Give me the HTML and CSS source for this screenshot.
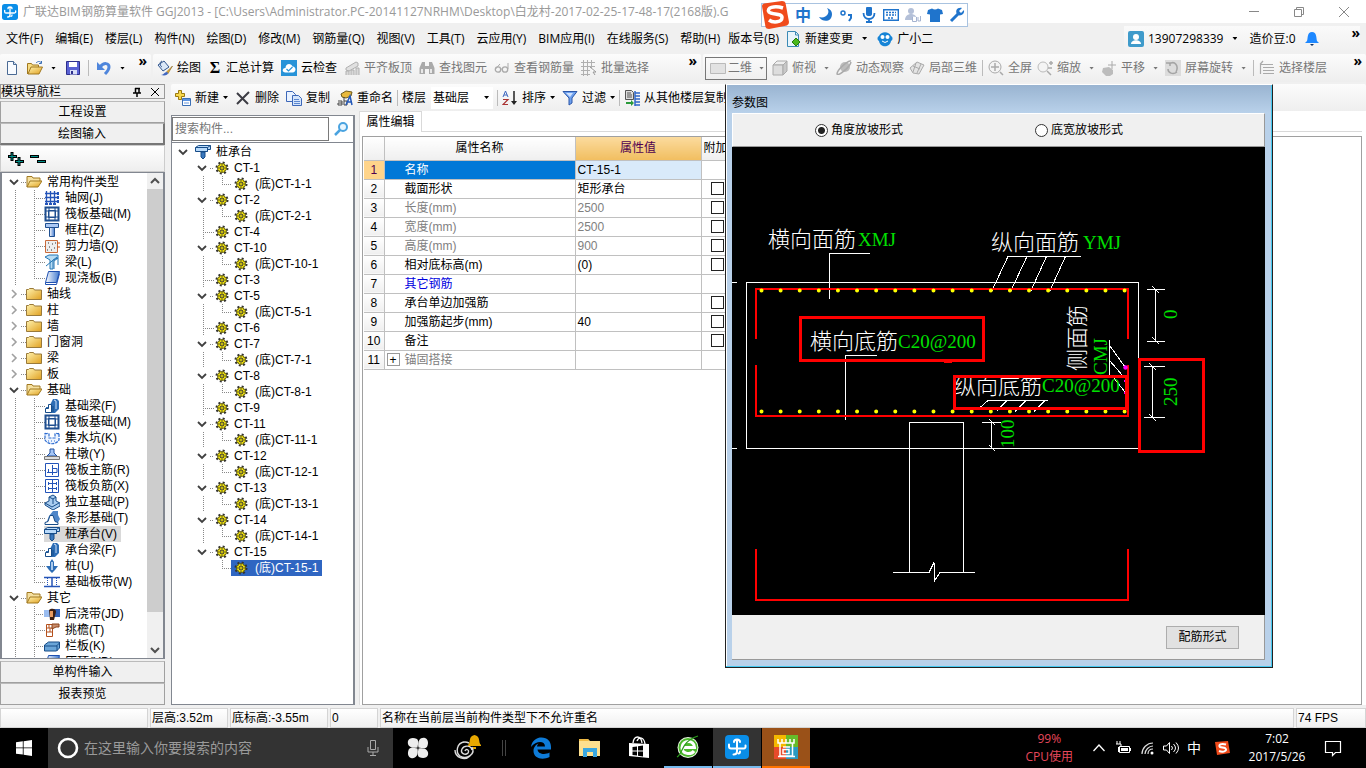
FILE: index.html
```html
<!DOCTYPE html>
<html lang="zh-CN">
<head>
<meta charset="utf-8">
<title>广联达BIM钢筋算量软件 GGJ2013</title>
<link rel="stylesheet" href="styles.css">
</head>
<body>
<svg class="defs" aria-hidden="true">
<defs>
<linearGradient id="gold" x1="0" y1="0" x2="1" y2="1"><stop offset="0" stop-color="#fff3b0"/><stop offset="1" stop-color="#e0a020"/></linearGradient>
<linearGradient id="steel" x1="0" y1="0" x2="1" y2="0"><stop offset="0" stop-color="#fff"/><stop offset="1" stop-color="#3f78cf"/></linearGradient>
<symbol id="logo" viewBox="0 0 24 24"><rect width="24" height="24" rx="4" fill="#0a8ee8"/><path d="M4 9.500v2q0 2 2 2h12.500q2.500 0 2-3M12 5v11q0 3.500-3.500 3.500M9 7q0-2.500 3-2.500t3 2.500M15 16.500q0 2-1.500 2" fill="none" stroke="#fff" stroke-width="2" stroke-linecap="round"/></symbol>
<symbol id="new" viewBox="0 0 16 16"><path d="M3.500 1.500h6l3 3v10h-9z" fill="#f8fbff" stroke="#4a6a94"/><path d="M9.500 1.500v3h3" fill="#cfe0f5" stroke="#4a6a94"/></symbol>
<symbol id="open" viewBox="0 0 16 16"><path d="M.5 14V3.500h4l1 1.500h6v3" fill="#f7dc82" stroke="#a07820"/><path d="M1 14l3-7h11.500l-3.500 7z" fill="url(#gold)" stroke="#a07820"/><path d="M9 3c2-2 4-2 5.500 0M14.500 1v2.500H12" fill="none" stroke="#3b6fb5"/></symbol>
<symbol id="save" viewBox="0 0 16 16"><path d="M1.500 1.500h13v13h-13z" fill="#5a62d4" stroke="#2d2f8c"/><path d="M4 2h8v5H4z" fill="#fff"/><path d="M5 10h7v4.500H5z" fill="#d8def8"/><path d="M6 11h2v3H6z" fill="#2d2f8c"/></symbol>
<symbol id="undo" viewBox="0 0 16 16"><path d="M4 7c4-5 9-4 9 0 0 3-2 5-4 7" fill="none" stroke="#4f86dc" stroke-width="3"/><path d="M1 2v8h8z" fill="#4f86dc"/></symbol>
<symbol id="paint" viewBox="0 0 16 16"><path d="M1 5l6-4 5 6-6 4z" fill="#dbe8f8" stroke="#31568e"/><path d="M5 1c-3 1-2 5 0 6" fill="none" stroke="#31568e"/><path d="M15.500 6l-6 6 1.500 1.500z" fill="#f0b030" stroke="#80601a" stroke-width=".6"/><path d="M10 12c-3 0-3 3-6 3 4 1 7 0 7-2z" fill="#4167c0"/></symbol>
<symbol id="cloud" viewBox="0 0 16 16"><path d="M0 0h16v16H0z" fill="#2793d8"/><path d="M4 12.500c-4-1-2-5 .5-4.500 0-5 6-5 7-1.500 4 0 4 6 0 6z" fill="#fff"/><path d="M5.500 9l2 2 4-4" fill="none" stroke="#2793d8" stroke-width="1.200"/></symbol>
<symbol id="align" viewBox="0 0 16 16"><path d="M2 8l10-6 2 1v3L5 11l-3-1z" fill="#e0e0e0" stroke="#b0b0b0"/><path d="M2 15v-4h3v4M7 15v-5h3v5M12 15V8h3v7" fill="#d8d8d8" stroke="#b0b0b0"/></symbol>
<symbol id="find" viewBox="0 0 16 16"><path d="M3 2h3v4h4V2h3l2.500 6v6H10V9H6v5H.5V8z" fill="#aaa"/><path d="M2 9h2v4H2zm9 0h2v4h-2z" fill="#e8e8e8"/></symbol>
<symbol id="glass" viewBox="0 0 16 16"><circle cx="4" cy="9.500" r="2.700" fill="none" stroke="#aaa" stroke-width="1.300"/><circle cx="11" cy="9.500" r="2.700" fill="none" stroke="#aaa" stroke-width="1.300"/><path d="M6 9h3M1.500 9L6 4M14 9V3" fill="none" stroke="#aaa"/></symbol>
<symbol id="batch" viewBox="0 0 16 16"><path d="M0 2.500h14M0 6.500h14M0 10.500h9M0 14.500h9M2.500 0v16M6.500 0v16M10.500 0v8" stroke="#b0b0b0" fill="none"/><path d="M9 7l6 5h-3l2 3" fill="#fff" stroke="#999"/></symbol>
<symbol id="plane" viewBox="0 0 16 16"><path d="M.5 3.500h15v10H.5z" fill="#e2e2e2" stroke="#bababa"/></symbol>
<symbol id="cube" viewBox="0 0 16 16"><path d="M1 5l4-4h10l-4 4z" fill="#eee" stroke="#aaa"/><path d="M1 5h10v10H1z" fill="#ddd" stroke="#aaa"/><path d="M11 5l4-4v10l-4 4z" fill="#c8c8c8" stroke="#aaa"/></symbol>
<symbol id="orbit" viewBox="0 0 16 16"><circle cx="9" cy="7" r="5" fill="#bcbcbc"/><path d="M15 1C12 0 1 10 1 14c2 2 13-7 14-12" fill="none" stroke="#aaa" stroke-width="1.500"/></symbol>
<symbol id="part" viewBox="0 0 16 16"><path d="M1 8l7-6 7 3-5 9-6-1z" fill="#e4e4e4" stroke="#aaa"/><path d="M4 6l7 3M7 3l-3 9M12 4l-4 9" stroke="#aaa" fill="none"/></symbol>
<symbol id="full" viewBox="0 0 16 16"><circle cx="7" cy="7" r="6" fill="#f4f4f4" stroke="#aaa"/><path d="M7 3v8M3 7h8M12 12l3 3" stroke="#aaa" stroke-width="1.500"/></symbol>
<symbol id="zoomi" viewBox="0 0 16 16"><circle cx="6" cy="7" r="5" fill="#f4f4f4" stroke="#bbb"/><path d="M10 11l4 4M12 3h4M14 1v4M11 8h4" stroke="#aaa" stroke-width="1.500"/></symbol>
<symbol id="pan" viewBox="0 0 16 16"><path d="M2 8l6-1 4 3v4l-3 2H5l-4-4z" fill="#bcbcbc"/><path d="M11 1v8M7 5h8" stroke="#aaa"/></symbol>
<symbol id="rot" viewBox="0 0 16 16"><path d="M0 0h16v16H0z" fill="#dcdcdc"/><path d="M4 4c6-4 10 2 7 8M12 12c-4 3-9 1-9-3M1 3h4v3" fill="none" stroke="#a4a4a4" stroke-width="1.500"/></symbol>
<symbol id="floors" viewBox="0 0 16 16"><path d="M1 4.500h13M4 1L1 4.500M4 7.500h11M4 10.500h11M4 13.500h11M1.500 5v9" stroke="#aaa" fill="none" stroke-width="1.200"/></symbol>
<symbol id="add" viewBox="0 0 16 16"><path d="M3.500.5h3v3h3v3h-3v3h-3v-3h-3v-3h3z" fill="#f8d84c" stroke="#9a7a10"/><path d="M7.500 8.500h8v7h-8z" fill="#fff" stroke="#3b6fb5"/><path d="M8 9h7v2H8z" fill="#5c93e0"/><path d="M9 13h5" stroke="#6b9adf"/></symbol>
<symbol id="del" viewBox="0 0 16 16"><path d="M2 3l11 11M14 2L2 14" stroke="#3c3c44" stroke-width="2" fill="none"/></symbol>
<symbol id="copy" viewBox="0 0 16 16"><path d="M.5 1.500h6l3 3v7h-9z" fill="#e9f2ff" stroke="#3c67b8"/><path d="M6.500 5.500h6l3 3v7h-9z" fill="#d5e5fb" stroke="#3c67b8"/><path d="M8 9.500h5M8 11.500h6M8 13.500h6" stroke="#5d88d0"/></symbol>
<symbol id="rename" viewBox="0 0 16 16"><path d="M4 4l5-3 6 1-1 4-5 2-4-1z" fill="#e8b93c" stroke="#6d5a1c"/><path d="M1 11h4v4H1v-2h4M7 7v8h3v-4H7" fill="none" stroke="#444"/><path d="M9 15L13 6l2 9M11 12h4" fill="none" stroke="#2458b8" stroke-width="1.500"/></symbol>
<symbol id="sort" viewBox="0 0 16 16"><path d="M1 7l2.500-6L6 7M2 5h3" fill="none" stroke="#3c66c0"/><path d="M1 9.500h5l-5 5h5" fill="none" stroke="#a33" stroke-width="1.200"/><path d="M12 1v11" stroke="#222" stroke-width="1.500"/><path d="M9 11h6l-3 4z" fill="#222"/></symbol>
<symbol id="filter" viewBox="0 0 16 16"><path d="M1 1.500h14L10 8v5l-3 2V8z" fill="#6da0ee" stroke="#2c57a8"/><path d="M4 3h7L8 7z" fill="#cfe2ff"/></symbol>
<symbol id="levels" viewBox="0 0 16 16"><path d="M1.500.5h6l2 2v7h-8z" fill="#ddd" stroke="#555"/><path d="M3 3h4M3 5h5M3 7h5" stroke="#555"/><path d="M11 1v15M11 3h5M11 6h5M11 9h5M11 12h5M11 15h5" stroke="#2e66c8" stroke-width="1.500"/><path d="M2 12h5v-2l3 3-3 3v-2H2z" fill="#2a9a3a"/></symbol>
<symbol id="change" viewBox="0 0 16 16"><path d="M2.500.5h8l3 3v12h-11z" fill="#e8f5fc" stroke="#3b8ab5"/><path d="M10.500 1v3h3" fill="none" stroke="#3b8ab5"/><path d="M11 7l4 4-4 4-4-4z" fill="#4ab81c" stroke="#267a0c"/></symbol>
<symbol id="mascot" viewBox="0 0 16 16"><path d="M2 5c2-5 10-5 12 0 2 1 2 4 0 5-1 7-11 7-12 0-2-1-2-4 0-5z" fill="#1684d6"/><circle cx="5.500" cy="6" r="2" fill="#fff"/><circle cx="10.500" cy="6" r="2" fill="#fff"/><path d="M5 10q3 3 6 0" stroke="#fff" fill="none"/></symbol>
<symbol id="user" viewBox="0 0 16 16"><rect width="16" height="16" rx="2" fill="#3f9bcb"/><circle cx="8" cy="6" r="3" fill="#fff"/><path d="M3 13c0-5 10-5 10 0z" fill="#fff"/></symbol>
<symbol id="bell" viewBox="0 0 16 16"><path d="M8 1c5 0 4 6 5 9l2 2H1l2-2c1-3 0-9 5-9z" fill="#1e88ff"/><path d="M6 13h4l-2 2z" fill="#136"/></symbol>
<symbol id="chev" viewBox="0 0 10 10"><path d="M1 3l4 4 4-4" fill="none" stroke="#404040" stroke-width="1.800"/></symbol>
<symbol id="chevr" viewBox="0 0 10 10"><path d="M3 1l4 4-4 4" fill="none" stroke="#a0a0a0" stroke-width="1.600"/></symbol>
<symbol id="folder" viewBox="0 0 16 16"><path d="M.5 13.500v-10h2l1-1h4l1 1.500h7v9.500z" fill="url(#gold)" stroke="#9a7a3a"/></symbol>
<symbol id="foldo" viewBox="0 0 16 16"><path d="M1 13V2.500h5L7 4h7v3" fill="#f5e0a0" stroke="#a07820"/><path d="M1 13l3-6h12l-4 6z" fill="url(#gold)" stroke="#a07820"/></symbol>
<symbol id="gridi" viewBox="0 0 16 16"><path d="M2.500 1v12M6.500 1v12M10.500 1v12M1 3.500h12M1 7.500h12M1 11.500h12" stroke="#2454b8" stroke-width="1.300"/><path d="M13 2h2v3h-2zm0 4h2v3h-2zm0 4h2v3h-2zM1 13h3v2H1zm4 0h3v2H5zm4 0h3v2H9z" fill="#2454b8"/></symbol>
<symbol id="raft" viewBox="0 0 16 16"><path d="M1.500 1.500h13v13h-13z" fill="#fff" stroke="#1f4f90" stroke-width="2"/><path d="M4.500 4.500h7v7h-7zM5 1v14M11 1v14M1 5h14M1 11h14" fill="none" stroke="#1f4f90"/></symbol>
<symbol id="col" viewBox="0 0 16 16"><path d="M1.500 1.500h13v4h-13z" fill="#aac8f4" stroke="#1f4f90"/><path d="M5.500 5.500h5v9h-5z" fill="url(#steel)" stroke="#1f4f90"/></symbol>
<symbol id="wall" viewBox="0 0 16 16"><path d="M1.500 2.500h12v12h-12z" fill="#eee" stroke="#c86a3a"/><path d="M4 5h1M8 6h1M5 9h1M10 10h1M7 12h1M11 5h1M3 12h1" stroke="#333"/><path d="M13 5h3M13 9h3" stroke="#d05010"/></symbol>
<symbol id="beam" viewBox="0 0 16 16"><path d="M1 3l4-2h9v3L9 6v9H6V6z" fill="#b8dcf4" stroke="#2577b5"/><path d="M2 12l11-9M10 15V7l4-3v7" fill="none" stroke="#2577b5"/></symbol>
<symbol id="slab" viewBox="0 0 16 16"><path d="M4.500 1.500h11l-3 11H1.500z" fill="url(#steel)" stroke="#1f50b0"/><path d="M1.500 12.500v2h11l3-11" fill="none" stroke="#1f50b0"/></symbol>
<symbol id="fbeam" viewBox="0 0 16 16"><path d="M2 15V9h3l4-8h4l2 2v8l-4 4z" fill="#2d6db5"/><path d="M1.500 14.500v-4h3v-4h3v8zM9 8v6" fill="#fff" stroke="#174c88"/><path d="M10 2l2 1v8" fill="none" stroke="#cfe3fa"/></symbol>
<symbol id="pit" viewBox="0 0 16 16"><path d="M1 3c1 2 3-1 4 1v4h6V4c1-2 3 1 4-1v7c-3 5-11 5-14 0z" fill="#eef5ff" stroke="#2a6ad0" stroke-width="1.200" stroke-dasharray="3 1"/><path d="M4 11h8" stroke="#2a6ad0" stroke-dasharray="1 2"/></symbol>
<symbol id="pier" viewBox="0 0 16 16"><path d="M6 3h4v4l3 3H3l3-3z" fill="#a5c6f5" stroke="#1f4fa0"/><path d="M.5 10.500h15v3H.5z" fill="#ddd" stroke="#777"/></symbol>
<symbol id="barx" viewBox="0 0 16 16"><path d="M1.500 1.500h13v13h-13z" fill="#fff" stroke="#2454b8"/><path d="M8.500 3v10M3 10.500h10M4.500 7v3.500M8 6.500h5v4" stroke="#2454b8" fill="none"/></symbol>
<symbol id="bary" viewBox="0 0 16 16"><path d="M1.500 1.500h13v13h-13z" fill="#fff" stroke="#2454b8"/><path d="M8.500 2v12M4 5.500h8M4 10.500h8M4.500 4v3M12.500 4v3M4.500 9v3M12.500 9v3" stroke="#2454b8" fill="none"/></symbol>
<symbol id="foot" viewBox="0 0 16 16"><path d="M1 9l4-2V3l4-2 3 2v4l4 2v3l-7 4-8-5z" fill="#a9cdf0" stroke="#174c88"/><path d="M5 3l4 2v5M9 5l3-2M1 9l7 4 7-4" fill="none" stroke="#174c88"/></symbol>
<symbol id="strip" viewBox="0 0 16 16"><path d="M2 14h11l3-5-2-4V1H9L5 6z" fill="#4f86c8"/><path d="M1 14.500v-2l3-1 2-6h3l2 6 3 1v2z" fill="#fff" stroke="#174c88"/></symbol>
<symbol id="cap" viewBox="0 0 16 16"><path d="M.5 3.500l3-2h12v4h-3v2H.5z" fill="#b9dafa" stroke="#174c88"/><path d="M.5 3.500h12v4M12.500 3.500l3-2" fill="none" stroke="#174c88"/><path d="M6 8h4v5l-2 2-2-2z" fill="#3977bd" stroke="#174c88"/></symbol>
<symbol id="pile" viewBox="0 0 16 16"><path d="M8 1l2 3v4h4l-3 4-3 3-3-3-3-4h4V4z" fill="#2d6db5"/><path d="M8 4v8" stroke="#d6e8fc" stroke-width="1.500"/></symbol>
<symbol id="band" viewBox="0 0 16 16"><path d="M0 3.500h16M0 12.500h16M8 4v8" stroke="#2454b8" stroke-width="1.500"/><path d="M3.500 4v8M12.500 4v8" stroke="#2454b8" stroke-dasharray="1 1"/></symbol>
<symbol id="post" viewBox="0 0 16 16"><path d="M0 4h6v7H0z" fill="#9bbdf0"/><path d="M10 3h6v8h-6z" fill="#3262b8"/><path d="M5 4c2-2 7-2 7 2l-2 8H6z" fill="#3b1e12"/><path d="M6 5h3v6H6z" fill="#e89b60"/></symbol>
<symbol id="eave" viewBox="0 0 16 16"><path d="M2.500 2.500h6v12h-6zM2 6h6M2 10h6M5 2v4M6 6v4" fill="#fff" stroke="#b5501c"/><path d="M8 2h7v3h-3l-4 2z" fill="#c98c6a" stroke="#8a4018"/></symbol>
<symbol id="rail" viewBox="0 0 16 16"><path d="M.5 13V7l4-3h11v6l-3 3z" fill="#6aa5d8" stroke="#174c88"/><path d="M1 8h12v5M12.500 8l3-3" fill="none" stroke="#174c88"/></symbol>
<symbol id="gear" viewBox="0 0 14 14"><circle cx="7" cy="7" r="5.500" fill="none" stroke="#333" stroke-width="2" stroke-dasharray="2 2.320"/><circle cx="7" cy="7" r="4.500" fill="#f5e60a" stroke="#4a4608" stroke-width=".8"/><circle cx="7" cy="7" r="1.500" fill="none" stroke="#333" stroke-width=".8"/><path d="M7 3v2M7 9v2M3 7h2M9 7h2M4.500 4.500L6 6M9.500 4.500L8 6M4.500 9.500L6 8M9.500 9.500L8 8" stroke="#333" stroke-width=".8"/></symbol>
</defs>
</svg>

<header class="titlebar">
  <svg class="ic"><use href="#logo"/></svg>
  <h1>广联达BIM钢筋算量软件 GGJ2013 - [C:\Users\Administrator.PC-20141127NRHM\Desktop\白龙村-2017-02-25-17-48-17(2168版).G</h1>
  <div class="winbtns">
    <button aria-label="最小化"><svg viewBox="0 0 12 12"><path d="M1 5.500h10"/></svg></button>
    <button aria-label="还原"><svg viewBox="0 0 12 12"><path d="M1.500 3.500h7v7h-7zM3.500 3V1.500h7v7H9"/></svg></button>
    <button aria-label="关闭"><svg viewBox="0 0 12 12"><path d="M1 1l10 10M11 1L1 11"/></svg></button>
  </div>
</header>

<nav class="menubar">
  <button>文件(F)</button><button>编辑(E)</button><button>楼层(L)</button><button>构件(N)</button><button>绘图(D)</button><button>修改(M)</button><button>钢筋量(Q)</button><button>视图(V)</button><button>工具(T)</button><button>云应用(Y)</button><button>BIM应用(I)</button><button>在线服务(S)</button><button>帮助(H)</button>
  <div class="extra">
    <button>版本号(B)</button>
    <button><svg class="ic"><use href="#change"/></svg>新建变更<i class="caret"></i></button>
    <button><svg class="ic"><use href="#mascot"/></svg>广小二</button>
  </div>
  <div class="account">
    <button><svg class="ic"><use href="#user"/></svg>13907298339<i class="caret"></i></button>
    <button>造价豆:0</button>
    <button aria-label="通知"><svg class="ic"><use href="#bell"/></svg></button>
    <b class="more">»</b>
  </div>
</nav>

<div class="toolrow">
  <div class="band file">
    <button aria-label="新建"><svg class="ic"><use href="#new"/></svg></button>
    <button aria-label="打开"><svg class="ic"><use href="#open"/></svg><i class="caret"></i></button>
    <button aria-label="保存"><svg class="ic"><use href="#save"/></svg></button>
    <i class="sep"></i>
    <button aria-label="撤销"><svg class="ic"><use href="#undo"/></svg><i class="caret"></i></button>
    <b class="more">»</b>
  </div>
  <div class="band draw">
    <button><svg class="ic"><use href="#paint"/></svg>绘图</button>
    <button><b class="sigma">Σ</b>汇总计算</button>
    <button><svg class="ic"><use href="#cloud"/></svg>云检查</button>
    <button class="off"><svg class="ic"><use href="#align"/></svg>平齐板顶</button>
    <button class="off"><svg class="ic"><use href="#find"/></svg>查找图元</button>
    <button class="off"><svg class="ic"><use href="#glass"/></svg>查看钢筋量</button>
    <button class="off"><svg class="ic"><use href="#batch"/></svg>批量选择</button>
    <b class="more">»</b>
  </div>
  <div class="band view">
    <div class="viewsel"><svg class="ic"><use href="#plane"/></svg><select aria-label="视图维度"><option>二维</option></select><i class="caret"></i></div>
    <button class="off"><svg class="ic"><use href="#cube"/></svg>俯视<i class="caret"></i></button>
    <button class="off"><svg class="ic"><use href="#orbit"/></svg>动态观察</button>
    <button class="off"><svg class="ic"><use href="#part"/></svg>局部三维</button>
    <i class="sep"></i>
    <button class="off"><svg class="ic"><use href="#full"/></svg>全屏</button>
    <button class="off"><svg class="ic"><use href="#zoomi"/></svg>缩放<i class="caret"></i></button>
    <button class="off"><svg class="ic"><use href="#pan"/></svg>平移<i class="caret"></i></button>
    <button class="off"><svg class="ic"><use href="#rot"/></svg>屏幕旋转<i class="caret"></i></button>
    <i class="sep"></i>
    <button class="off"><svg class="ic"><use href="#floors"/></svg>选择楼层</button>
    <b class="more">»</b>
  </div>
</div>

<div class="workspace">
  <aside class="nav">
    <div class="navhead"><span>模块导航栏</span>
      <button aria-label="固定"><svg viewBox="0 0 10 10"><path d="M3 1.500h5M3.500 1v5M7 1v5M1 6h8M5 6v4" stroke-width="1.500"/></svg></button>
      <button aria-label="关闭"><svg viewBox="0 0 10 10"><path d="M1 1l8 8M9 1L1 9"/></svg></button>
    </div>
    <button class="navbtn">工程设置</button>
    <button class="navbtn down">绘图输入</button>
    <div class="expand">
      <button aria-label="全部展开"><svg viewBox="0 0 18 16"><path d="M5 1v9M1 5.500h9M12 6v9M8 10.500h9" stroke="#000" stroke-width="3"/><path d="M5 2v7M2 5.500h7M12 7v7M9 10.500h7" stroke="#00908a"/></svg></button>
      <button aria-label="全部折叠"><svg viewBox="0 0 18 16"><path d="M1 5.500h9M8 10.500h9" stroke="#000" stroke-width="3"/><path d="M2 5.500h7M9 10.500h7" stroke="#00908a"/></svg></button>
    </div>
    <div class="navtree">
      <ul>
        <li class="p"><svg class="ch"><use href="#chev"/></svg><svg class="ic"><use href="#foldo"/></svg>常用构件类型</li>
        <li class="c"><svg class="ic"><use href="#gridi"/></svg>轴网(J)</li>
        <li class="c"><svg class="ic"><use href="#raft"/></svg>筏板基础(M)</li>
        <li class="c"><svg class="ic"><use href="#col"/></svg>框柱(Z)</li>
        <li class="c"><svg class="ic"><use href="#wall"/></svg>剪力墙(Q)</li>
        <li class="c"><svg class="ic"><use href="#beam"/></svg>梁(L)</li>
        <li class="c end"><svg class="ic"><use href="#slab"/></svg>现浇板(B)</li>
        <li class="p"><svg class="ch"><use href="#chevr"/></svg><svg class="ic"><use href="#folder"/></svg>轴线</li>
        <li class="p"><svg class="ch"><use href="#chevr"/></svg><svg class="ic"><use href="#folder"/></svg>柱</li>
        <li class="p"><svg class="ch"><use href="#chevr"/></svg><svg class="ic"><use href="#folder"/></svg>墙</li>
        <li class="p"><svg class="ch"><use href="#chevr"/></svg><svg class="ic"><use href="#folder"/></svg>门窗洞</li>
        <li class="p"><svg class="ch"><use href="#chevr"/></svg><svg class="ic"><use href="#folder"/></svg>梁</li>
        <li class="p"><svg class="ch"><use href="#chevr"/></svg><svg class="ic"><use href="#folder"/></svg>板</li>
        <li class="p"><svg class="ch"><use href="#chev"/></svg><svg class="ic"><use href="#foldo"/></svg>基础</li>
        <li class="c"><svg class="ic"><use href="#fbeam"/></svg>基础梁(F)</li>
        <li class="c"><svg class="ic"><use href="#raft"/></svg>筏板基础(M)</li>
        <li class="c"><svg class="ic"><use href="#pit"/></svg>集水坑(K)</li>
        <li class="c"><svg class="ic"><use href="#pier"/></svg>柱墩(Y)</li>
        <li class="c"><svg class="ic"><use href="#barx"/></svg>筏板主筋(R)</li>
        <li class="c"><svg class="ic"><use href="#bary"/></svg>筏板负筋(X)</li>
        <li class="c"><svg class="ic"><use href="#foot"/></svg>独立基础(P)</li>
        <li class="c"><svg class="ic"><use href="#strip"/></svg>条形基础(T)</li>
        <li class="c"><span class="cur"><svg class="ic"><use href="#cap"/></svg>桩承台(V)</span></li>
        <li class="c"><svg class="ic"><use href="#fbeam"/></svg>承台梁(F)</li>
        <li class="c"><svg class="ic"><use href="#pile"/></svg>桩(U)</li>
        <li class="c end"><svg class="ic"><use href="#band"/></svg>基础板带(W)</li>
        <li class="p"><svg class="ch"><use href="#chev"/></svg><svg class="ic"><use href="#foldo"/></svg>其它</li>
        <li class="c"><svg class="ic"><use href="#post"/></svg>后浇带(JD)</li>
        <li class="c"><svg class="ic"><use href="#eave"/></svg>挑檐(T)</li>
        <li class="c"><svg class="ic"><use href="#rail"/></svg>栏板(K)</li>
        <li class="c"><svg class="ic"><use href="#slab"/></svg>压顶(YD)</li>
      </ul>
      <div class="scroll"><svg viewBox="0 0 10 10"><path d="M1 7l4-4 4 4"/></svg><div class="thumb"></div><svg viewBox="0 0 10 10"><path d="M1 3l4 4 4-4"/></svg></div>
    </div>
    <button class="navbtn">单构件输入</button>
    <button class="navbtn">报表预览</button>
  </aside>

  <main class="content">
    <div class="band edit">
      <button><svg class="ic"><use href="#add"/></svg>新建<i class="caret"></i></button>
      <button><svg class="ic"><use href="#del"/></svg>删除</button>
      <button><svg class="ic"><use href="#copy"/></svg>复制</button>
      <button><svg class="ic"><use href="#rename"/></svg>重命名</button>
      <i class="sep"></i>
      <label for="floor">楼层</label>
      <div class="floorsel"><select id="floor"><option>基础层</option></select><i class="caret"></i></div>
      <i class="sep"></i>
      <button><svg class="ic"><use href="#sort"/></svg>排序<i class="caret"></i></button>
      <button><svg class="ic"><use href="#filter"/></svg>过滤<i class="caret"></i></button>
      <i class="sep"></i>
      <button><svg class="ic"><use href="#levels"/></svg>从其他楼层复制</button>
    </div>
    <div class="panes">
      <section class="members">
        <div class="search"><input type="text" placeholder="搜索构件..." aria-label="搜索构件"><button aria-label="搜索"><svg viewBox="0 0 16 16"><circle cx="10" cy="6" r="4" fill="#e8f6ff" stroke="#4aa3e0" stroke-width="2"/><path d="M7 9l-5 5" stroke="#4aa3e0" stroke-width="2.500"/></svg></button></div>
        <ul class="mtree">
          <li class="r"><svg class="ch"><use href="#chev"/></svg><svg class="ic"><use href="#cap"/></svg>桩承台</li>
          <li class="a"><svg class="ch"><use href="#chev"/></svg><svg class="gr"><use href="#gear"/></svg>CT-1</li>
          <li class="b"><span><svg class="gr"><use href="#gear"/></svg>(底)CT-1-1</span></li>
          <li class="a"><svg class="ch"><use href="#chev"/></svg><svg class="gr"><use href="#gear"/></svg>CT-2</li>
          <li class="b"><span><svg class="gr"><use href="#gear"/></svg>(底)CT-2-1</span></li>
          <li class="a leaf"><svg class="gr"><use href="#gear"/></svg>CT-4</li>
          <li class="a"><svg class="ch"><use href="#chev"/></svg><svg class="gr"><use href="#gear"/></svg>CT-10</li>
          <li class="b"><span><svg class="gr"><use href="#gear"/></svg>(底)CT-10-1</span></li>
          <li class="a leaf"><svg class="gr"><use href="#gear"/></svg>CT-3</li>
          <li class="a"><svg class="ch"><use href="#chev"/></svg><svg class="gr"><use href="#gear"/></svg>CT-5</li>
          <li class="b"><span><svg class="gr"><use href="#gear"/></svg>(底)CT-5-1</span></li>
          <li class="a leaf"><svg class="gr"><use href="#gear"/></svg>CT-6</li>
          <li class="a"><svg class="ch"><use href="#chev"/></svg><svg class="gr"><use href="#gear"/></svg>CT-7</li>
          <li class="b"><span><svg class="gr"><use href="#gear"/></svg>(底)CT-7-1</span></li>
          <li class="a"><svg class="ch"><use href="#chev"/></svg><svg class="gr"><use href="#gear"/></svg>CT-8</li>
          <li class="b"><span><svg class="gr"><use href="#gear"/></svg>(底)CT-8-1</span></li>
          <li class="a leaf"><svg class="gr"><use href="#gear"/></svg>CT-9</li>
          <li class="a"><svg class="ch"><use href="#chev"/></svg><svg class="gr"><use href="#gear"/></svg>CT-11</li>
          <li class="b"><span><svg class="gr"><use href="#gear"/></svg>(底)CT-11-1</span></li>
          <li class="a"><svg class="ch"><use href="#chev"/></svg><svg class="gr"><use href="#gear"/></svg>CT-12</li>
          <li class="b"><span><svg class="gr"><use href="#gear"/></svg>(底)CT-12-1</span></li>
          <li class="a"><svg class="ch"><use href="#chev"/></svg><svg class="gr"><use href="#gear"/></svg>CT-13</li>
          <li class="b"><span><svg class="gr"><use href="#gear"/></svg>(底)CT-13-1</span></li>
          <li class="a"><svg class="ch"><use href="#chev"/></svg><svg class="gr"><use href="#gear"/></svg>CT-14</li>
          <li class="b"><span><svg class="gr"><use href="#gear"/></svg>(底)CT-14-1</span></li>
          <li class="a"><svg class="ch"><use href="#chev"/></svg><svg class="gr"><use href="#gear"/></svg>CT-15</li>
          <li class="b last"><span class="cur"><svg class="gr"><use href="#gear"/></svg>(底)CT-15-1</span></li>
        </ul>
      </section>
      <section class="props">
        <div class="tabs"><button>属性编辑</button></div>
        <div class="sheet">
          <table>
            <colgroup><col class="cn"><col class="cname"><col class="cval"><col class="cadd"></colgroup>
            <thead><tr><th></th><th>属性名称</th><th class="hot">属性值</th><th class="add">附加</th></tr></thead>
            <tbody>
              <tr class="sel"><th>1</th><td>名称</td><td>CT-15-1</td><td></td></tr>
              <tr><th>2</th><td>截面形状</td><td>矩形承台</td><td><input type="checkbox" aria-label="附加 截面形状"></td></tr>
              <tr class="dim"><th>3</th><td>长度(mm)</td><td>2500</td><td><input type="checkbox" aria-label="附加 长度"></td></tr>
              <tr class="dim"><th>4</th><td>宽度(mm)</td><td>2500</td><td><input type="checkbox" aria-label="附加 宽度"></td></tr>
              <tr class="dim"><th>5</th><td>高度(mm)</td><td>900</td><td><input type="checkbox" aria-label="附加 高度"></td></tr>
              <tr><th>6</th><td>相对底标高(m)</td><td>(0)</td><td><input type="checkbox" aria-label="附加 相对底标高"></td></tr>
              <tr class="blue"><th>7</th><td>其它钢筋</td><td></td><td></td></tr>
              <tr><th>8</th><td>承台单边加强筋</td><td></td><td><input type="checkbox" aria-label="附加 承台单边加强筋"></td></tr>
              <tr><th>9</th><td>加强筋起步(mm)</td><td>40</td><td><input type="checkbox" aria-label="附加 加强筋起步"></td></tr>
              <tr><th>10</th><td>备注</td><td></td><td><input type="checkbox" aria-label="附加 备注"></td></tr>
              <tr class="dim grp"><th>11</th><td><button aria-label="展开">+</button>锚固搭接</td><td></td><td></td></tr>
            </tbody>
          </table>
        </div>
      </section>
    </div>
  </main>
</div>

<footer class="status">
  <span class="s1"></span><span class="s2">层高:3.52m</span><span class="s3">底标高:-3.55m</span><span class="s4">0</span><span class="s5">名称在当前层当前构件类型下不允许重名</span><span class="s6">74 FPS</span>
</footer>

<div class="taskbar">
  <button class="tk" aria-label="开始"><svg viewBox="0 0 16 16"><path d="M0 2.300L6.800 1.300v6.200H0zM7.600 1.200L16 0v7.500H7.600zM0 8.300h6.800v6.300L0 13.700zM7.600 8.300H16V16l-8.400-1.200z" fill="#fff"/></svg></button>
  <label class="find"><svg class="ring" viewBox="0 0 22 22"><circle cx="11" cy="11" r="9" fill="none" stroke="#fff" stroke-width="2.600"/></svg><input type="text" placeholder="在这里输入你要搜索的内容" aria-label="搜索"><svg class="mic" viewBox="0 0 12 18"><path d="M3.500 1.500h5v9h-5zM1 8v5h10V8M6 13v3M3 16.500h6" fill="none" stroke="#aaa"/></svg></label>
  <button class="tk" aria-label="应用"><svg viewBox="0 0 24 24"><g fill="#eee"><path d="M11.500 11.500C4 13 1 9 2 5c1-3 5-4 9-2 2 2 1 5 .5 8.500z"/><path d="M12.500 11.500C11 4 15 1 19 2c3 1 4 5 2 9-2 2-5 1-8.500.5z"/><path d="M12.500 12.500c7.500-1.500 10.500 2.500 9.500 6.500-1 3-5 4-9 2-2-2-1-5-.5-8.500z"/><path d="M11.500 12.500c1.500 7.500-2.500 10.500-6.500 9.500-3-1-4-5-2-9 2-2 5-1 8.500-.5z"/></g></svg></button>
  <button class="tk" aria-label="提醒"><svg class="big" viewBox="0 0 28 28"><path d="M12 17c1-3 5-1 3 2-3 3-8 0-6-4 2-4 9-4 10 1M19 13c4 7-5 13-12 9-5-4-3-13 4-14M2 16c0 8 10 11 15 6M5 12c2-4 7-5 11-3" fill="none" stroke="#ddd" stroke-width="1.400"/><path d="M15 11c3-2 0-9 6.500-10C28 2 25 9 28 11v1H15zM20 13h3v2h-3z" fill="#e8a800"/></svg></button>
  <i class="grip"></i>
  <button class="tk" aria-label="Edge"><svg viewBox="0 0 24 24"><path d="M2 11C3 4 8 1.500 12.500 1.500c6 0 9.500 4 9.500 9.500v2.500H8.500c.5 5 8 5.500 12 3V21c-7 3.500-16 1.500-16-6 0-4 2.500-6.500 5-7.500-1 1-1.500 2-1.500 3h8c0-6-9-6-14 .5z" fill="#0e7bd8"/></svg></button>
  <button class="tk" aria-label="文件资源管理器"><svg viewBox="0 0 24 24"><path d="M1 3h9l2 2h10v15H1z" fill="#fde08f"/><path d="M1 3h9l1 2H1z" fill="#f0bb45"/><path d="M5 21v-9h14v9h-4v-5h-6v5z" fill="#3aa7e0"/></svg></button>
  <button class="tk" aria-label="应用商店"><svg viewBox="0 0 24 24"><path d="M2 7l20 1v14L2 20z" fill="#fff"/><path d="M6 7c1-8 8-8 9 0M10 5c2-5 7-4 8 3" fill="none" stroke="#fff" stroke-width="1.300"/><path d="M5.500 11l4.500-.6v4.100H5.500zM11 10.300l5-.7v4.900h-5zM5.500 15.500H10v4l-4.500-.6zM11 15.500h5v4.900l-5-.7z" fill="#000"/></svg></button>
  <button class="tk run" aria-label="360浏览器"><svg viewBox="0 0 24 24"><circle cx="12" cy="12.500" r="10.500" fill="#e8f8e0"/><circle cx="12" cy="12.500" r="9.500" fill="#4cb82c"/><path d="M6 12.500h12.500C18 4.500 6.500 4.500 6 12.500c0 7 9 7.500 12 3.500" fill="none" stroke="#fff" stroke-width="3"/><path d="M1 22C7 19 5 6 22 1" fill="none" stroke="#2a9a1a" stroke-width="1.200"/></svg></button>
  <button class="tk run on" aria-label="GGJ2013"><svg viewBox="0 0 24 24"><use href="#logo"/></svg></button>
  <button class="tk hot" aria-label="截图"><svg viewBox="0 0 24 24"><path d="M0 0h12v12H0z" fill="#f5b800"/><path d="M12 0h12v12H12z" fill="#66bb2a"/><path d="M0 12h12v12H0z" fill="#e84a2a"/><path d="M12 12h12v12H12z" fill="#2a9ac0"/><path d="M4 4v4h16V4M8 4v4M12 4v4M16 4v4M6 8v13h12.500V8M9 12h7M9 14.500h6v4H9zM4 21.500h17" fill="none" stroke="#fff" stroke-width="1.500"/></svg></button>
  <div class="tray">
    <div class="cpu">99%<br>CPU使用</div>
    <svg viewBox="0 0 16 16"><path d="M2.500 11L8 5l5.500 6" fill="none" stroke="#fff" stroke-width="1.300"/></svg>
    <svg viewBox="0 0 16 16"><path d="M4.500 6.500h10v6h-10zM15.500 8v3M2 1v3M5 1v3M1 4h5v2L3.500 8M3.500 7v5" fill="none" stroke="#fff"/><path d="M6 8h7v3H6z" fill="#fff"/></svg>
    <svg viewBox="0 0 16 16"><path d="M3 14C3 8 8 3 14 3M6 14c0-4 4-8 8-8M9 14c0-3 2-5 5-5" fill="none" stroke="#ddd" stroke-width="1.200"/><circle cx="13" cy="13" r="1.500" fill="#fff"/></svg>
    <svg viewBox="0 0 16 16"><path d="M.5 6h3l3-3.500v11L3.500 10h-3zM8.500 6q2 2 0 4M10.500 4q4 4 0 8M13 2.500q5 5.500 0 11" fill="none" stroke="#fff"/></svg>
    <span class="ime">中</span>
    <svg class="sg" viewBox="0 0 16 16"><path d="M1 2l13-1 2 12-13 2z" fill="#f04a1a"/><path d="M12 4.500C7 3 4 5 6 7l5 1c3 2-1 5-6 3" fill="none" stroke="#fff" stroke-width="2"/></svg>
    <div class="clock">7:02<br>2017/5/26</div>
    <svg class="note" viewBox="0 0 18 18"><path d="M1.500 2.500h15v11h-5l-3 3v-3h-7z" fill="none" stroke="#fff" stroke-width="1.200"/></svg>
  </div>
</div>

<div class="imebar">
  <svg class="slogo" viewBox="0 0 28 28"><path d="M1 5Q1 3 3 2.500L21 0q3 0 3.500 2L28 21q0 3-2 3.500L8 28q-3 0-3.500-2z" fill="#f04b1c"/><path d="M22 7C13 4 5 7 8 11c3 3 13 1 13 5.500 0 5-9 5.500-13 2.500" fill="none" stroke="#fff" stroke-width="3.500"/></svg>
  <b>中</b>
  <svg viewBox="0 0 16 16"><path d="M10 1c4 5-1 11-8 9 4 6 13 5 13-3 0-3-2-5-5-6z" fill="#1f74cc"/></svg>
  <svg viewBox="0 0 16 16"><circle cx="4" cy="6" r="2" fill="none" stroke="#1f74cc" stroke-width="1.500"/><path d="M9 8h3v3l-2 3" fill="none" stroke="#1f74cc" stroke-width="2"/></svg>
  <svg viewBox="0 0 16 16"><path d="M6 0h4q1 0 1 1v6q0 2-3 2T5 7V1q0-1 1-1z" fill="#1f74cc"/><path d="M2.500 6c0 8 11 8 11 0M8 12v3M5 15h6" fill="none" stroke="#1f74cc" stroke-width="1.800"/></svg>
  <svg viewBox="0 0 16 16"><path d="M.7 2.700h14.600v10.600H.7z" fill="none" stroke="#1f74cc" stroke-width="1.400"/><path d="M3 5.500h10M3 8h10M5 11h6" stroke="#1f74cc" stroke-dasharray="2 1" stroke-width="1.500"/></svg>
  <svg viewBox="0 0 16 16"><circle cx="6" cy="4" r="3" fill="#b4c0d8"/><path d="M0 13c0-8 12-8 12 0z" fill="#b4c0d8"/><path d="M7.500 9.500v5h4V10M13 10v4h2.500V9" fill="#fff" stroke="#a5b3d0"/></svg>
  <svg viewBox="0 0 16 16"><path d="M1 3l4-1.500q3 2 6 0L15 3l1 4-3 .5V15H3V7.500L0 7z" fill="#1f74cc"/></svg>
  <svg viewBox="0 0 16 16"><path d="M2 14l8-8" stroke="#1f74cc" stroke-width="3"/><path d="M15 3l-3 3-2-2 3-3c-5-1-7 3-5 6 2 3 8 1 7-4z" fill="#1f74cc"/></svg>
</div>

<div class="dialog" role="dialog" aria-labelledby="dt">
  <h2 id="dt">参数图</h2>
  <div class="radios">
    <label><input type="radio" name="slope" checked>角度放坡形式</label>
    <label><input type="radio" name="slope">底宽放坡形式</label>
  </div>
  <svg class="cad" viewBox="732 147 533 468">
    <g fill="none" stroke="#fff" shape-rendering="crispEdges">
      <path d="M746.500 282.500h392v166h-392zM732 282.500h5M732 448.500h5"/>
      <path d="M909.500 572.500v-150h54v150M893 572.500h36l5-10v19l6-9h35"/>
      <path d="M870 253.500h-40.500V299M877 355.500h-31.500V420"/>
      <path d="M1081 256.500h-73l-16 34M1027 256.500l-16 34M1046.500 256.500l-15.500 34M1065.500 256.500l-15.500 34"/>
      <path d="M1109.500 340v35M1110 346l15 21M1110 361l13 15M1113 377l12 15"/>
      <path d="M1048 400.500h-60l-9 8M1007 400.500l-10 10M1026 400.500l-11 11M1045 400.500l-11 11"/>
      <path d="M982 422.500h19M991.500 422v27M989 419l6 6M989 445l6 6"/>
      <path d="M1147 289.500h18M1147 341.500h18M1155.500 289v52M1152 286l7 7M1152 337l7 7"/>
      <path d="M1144 366.500h21M1144 417.500h21M1152.500 366v52M1149 363l7 7M1149 414l7 7"/>
    </g>
    <g fill="none" stroke="#f00" stroke-width="2" shape-rendering="crispEdges">
      <path d="M756 339v-50h372v50M756 365v51h372v-51M756 549v51h372v-51"/>
    </g>
    <g fill="none" stroke="#ff0" stroke-width="4" stroke-linecap="round">
      <path d="M761.500 290.500H1126M761.500 411.500H1126" stroke-dasharray="0 19.110"/>
    </g>
    <circle cx="1125.500" cy="367.500" r="2.200" fill="#f0f"/>
    <path d="M1125.500 380v2M1125.500 392v2" stroke="#f0f" stroke-width="3"/>
    <g class="han">
      <text x="768" y="247">横向面筋</text><text x="991" y="250">纵向面筋</text><text x="810" y="349">横向底筋</text><text x="954" y="394">纵向底筋</text>
      <text transform="translate(1085 371) rotate(-90)">侧面筋</text>
    </g>
    <g class="val">
      <text x="858" y="246">XMJ</text><text x="1083" y="249">YMJ</text><text x="898" y="348">C20@200</text><text x="1042" y="392">C20@200</text>
      <text transform="translate(1107 375) rotate(-90)">CMJ</text>
      <text transform="translate(1177 319) rotate(-90)">0</text>
      <text transform="translate(1177 406) rotate(-90)">250</text>
      <text transform="translate(1014 448) rotate(-90)">100</text>
    </g>
    <g fill="none" stroke="#f00" stroke-width="3" shape-rendering="crispEdges">
      <path d="M800.500 317.500h183v43h-183zM954.500 376.500h172v32h-172zM1139.500 359.500h64v92h-64zM944 361.500h8"/>
    </g>
  </svg>
  <div class="foot"><button>配筋形式</button></div>
</div>
</body>
</html>
```

FILE: styles.css
```css
* { box-sizing: border-box; }
html, body { height: 100%; }
body {
  margin: 0;
  display: flex;
  flex-direction: column;
  overflow: hidden;
  position: relative;
  background: #f0f0f0;
  color: #000;
  font: 12px/16px "Open Sans", "Noto Sans CJK SC", sans-serif;
}
h1, h2, ul { margin: 0; padding: 0; font: inherit; list-style: none; }
button, input, select { font: inherit; color: inherit; margin: 0; padding: 0; border: 0; background: none; }
select { appearance: none; outline: 0; }
svg { flex: none; }
.defs { position: absolute; width: 0; height: 0; }
.ic { width: 16px; height: 16px; }
.gr { width: 14px; height: 14px; }
.ch { width: 10px; height: 10px; }
.caret { flex: none; width: 5px; height: 3px; margin: 0 4px 0 5px; background: currentColor; clip-path: polygon(0 0, 100% 0, 50% 100%); }
.more { font: bold 14px/14px "Open Sans", sans-serif; align-self: flex-start; margin-left: auto; }
.sep { flex: none; width: 1px; height: 16px; background: #bbb; }

/* title and menus */
.titlebar { flex: none; height: 23px; display: flex; align-items: center; padding-left: 2px; gap: 5px; background: #fff; color: #999; }
.titlebar h1 { flex: 1; min-width: 0; white-space: nowrap; overflow: hidden; }
.winbtns { display: flex; }
.winbtns button { width: 45px; height: 20px; display: grid; place-items: center; }
.winbtns svg { width: 12px; height: 12px; fill: none; stroke: #888; }
.menubar { flex: none; height: 31px; display: flex; align-items: center; gap: 12px; padding: 0 6px; white-space: nowrap; }
.menubar button { display: flex; align-items: center; gap: 4px; flex: none; }
.extra { display: flex; align-items: center; gap: 6px; margin-left: -4px; }
.account { margin-left: auto; display: flex; align-items: center; gap: 8px; width: 236px; height: 26px; padding-left: 4px; background: linear-gradient(#fafafa, #f0f0f0); }

/* tool bars */
.toolrow { flex: none; height: 30px; display: flex; gap: 2px; padding-bottom: 2px; }
.band { display: flex; align-items: center; gap: 7px; height: 28px; padding: 0 4px; white-space: nowrap; background: linear-gradient(#fcfcfc, #eee); border-radius: 2px; }
.band button { display: flex; align-items: center; gap: 4px; flex: none; }
.band .caret { margin: 0 2px 0 4px; }
.band .off, .viewsel { color: #777; }
.file { width: 151px; }
.draw { width: 548px; }
.view { flex: 1; min-width: 0; gap: 5px; padding-left: 2px; }
.sigma { font: bold 16px/16px "Liberation Serif", serif; width: 14px; }
.viewsel { display: flex; align-items: center; width: 62px; height: 23px; padding-left: 4px; border: 1px solid #777; gap: 2px; }
.viewsel select { width: 28px; }

/* workspace */
.workspace { flex: 1; min-height: 0; display: grid; grid-template-columns: 165px minmax(0, 1fr); column-gap: 6px; }
.nav { display: flex; flex-direction: column; min-height: 0; padding-bottom: 3px; font-family: "Liberation Sans", "Noto Sans CJK SC", sans-serif; }
.navhead { display: flex; align-items: center; height: 15px; margin-bottom: 2px; border: 1px solid #999; padding-right: 4px; gap: 8px; }
.navhead span { margin-right: auto; }
.navhead button { display: flex; }
.navhead svg { width: 10px; height: 10px; fill: none; stroke: #000; }
.navbtn { flex: none; height: 22px; border: 1px solid #a0a0a0; border-top-color: #bbb; background: #f0f0f0; }
.navbtn.down { border-right: 2px solid #777; border-bottom: 2px solid #777; }
.expand { flex: none; height: 27px; display: flex; align-items: center; gap: 4px; padding-left: 6px; background: linear-gradient(#fff, #eee); border: 1px solid #ccc; }
.expand svg { width: 18px; height: 16px; display: block; }
.navtree { flex: 1; min-height: 0; display: flex; margin-bottom: 2px; border: 1px solid #828790; border-left-width: 2px; border-right-width: 2px; background: #fff; overflow: hidden; }
.navtree ul { flex: 1; min-width: 0; padding-top: 1px; white-space: nowrap; overflow: hidden; }
li { display: flex; align-items: center; height: 16px; }
.p { padding-left: 7px; gap: 7px; background: repeating-linear-gradient(90deg, #888 0 1px, transparent 1px 2px) 19px 8px / 5px 1px no-repeat; }
.p .ic { margin-right: -2px; }
.c { padding-left: 42px; gap: 5px; background: repeating-linear-gradient(#888 0 1px, transparent 1px 2px) 13px 0 / 1px 100% no-repeat, repeating-linear-gradient(#888 0 1px, transparent 1px 2px) 32px 0 / 1px 100% no-repeat, repeating-linear-gradient(90deg, #888 0 1px, transparent 1px 2px) 32px 8px / 11px 1px no-repeat; }
.c.end { background-size: 1px 100%, 1px 8px, 11px 1px; }
.c .cur { display: flex; gap: 5px; padding-right: 4px; background: #d9d9d9; }
.scroll { width: 16px; display: flex; flex-direction: column; align-items: center; background: #f0f0f0; }
.scroll svg { width: 10px; height: 16px; fill: none; stroke: #505050; stroke-width: 2; }
.thumb { width: 100%; flex: 1; margin-bottom: 30px; background: #cdcdcd; }

.content { display: flex; flex-direction: column; min-width: 0; min-height: 0; }
.edit { flex: none; height: 27px; overflow: hidden; }
.edit .caret { margin: 0; }
.edit .sep { margin: 0 -3px; }
.floorsel { display: flex; align-items: center; width: 62px; height: 22px; padding: 0 4px 0 2px; margin-left: -2px; background: #fff; flex: none; }
.floorsel select { flex: 1; min-width: 0; }
.panes { flex: 1; min-height: 0; display: grid; grid-template-columns: 184px minmax(0, 1fr); column-gap: 4px; padding-bottom: 3px; font-family: "Liberation Sans", "Noto Sans CJK SC", sans-serif; }
.members { display: flex; flex-direction: column; min-height: 0; margin-top: 4px; background: #fff; border: 1px solid #828790; border-right-width: 2px; }
.search { display: flex; height: 27px; padding: 1px 0; border-bottom: 1px solid #828790; }
.search input { width: 157px; border: 1px solid #7a7a7a; background: #fff; padding-left: 2px; }
.search button { flex: 1; display: grid; place-items: center; }
.search svg { width: 16px; height: 16px; }
::placeholder { color: #767676; opacity: 1; }
.mtree { flex: 1; min-height: 0; padding-top: 1px; }
.r { padding-left: 6px; gap: 7px; }
.r .ic { margin-right: -2px; }
.a { padding-left: 25px; gap: 8px; background: repeating-linear-gradient(90deg, #888 0 1px, transparent 1px 2px) 38px 8px / 4px 1px no-repeat; }
.a .gr { margin-right: -3px; }
.a.leaf { padding-left: 43px; background: repeating-linear-gradient(#888 0 1px, transparent 1px 2px) 31px 0 / 1px 100% no-repeat, repeating-linear-gradient(90deg, #888 0 1px, transparent 1px 2px) 31px 8px / 11px 1px no-repeat; }
.b { padding-left: 59px; background: repeating-linear-gradient(#888 0 1px, transparent 1px 2px) 31px 0 / 1px 100% no-repeat, repeating-linear-gradient(#888 0 1px, transparent 1px 2px) 50px 0 / 1px 8px no-repeat, repeating-linear-gradient(90deg, #888 0 1px, transparent 1px 2px) 50px 8px / 10px 1px no-repeat; }
.b span { display: flex; align-items: center; gap: 7px; padding: 0 4px 0 3px; }
.b .cur { color: #fff; background: #2f66c2; }
.last { background-size: 0 0, 1px 8px, 10px 1px; }

.props { display: flex; flex-direction: column; min-width: 0; min-height: 0; padding-right: 4px; background: #fff; border-left: 1px solid #ddd; }
.tabs { height: 21px; display: flex; border-bottom: 1px solid #d9d9d9; margin-bottom: 4px; }
.tabs button { width: 62px; height: 21px; background: #fff; border: 1px solid #d9d9d9; border-bottom: 0; border-left: 0; }
.sheet { flex: 1; min-height: 0; margin-left: 2px; border: 1px solid #a0a0a0; padding-left: 1px; }
table { border-collapse: collapse; table-layout: fixed; width: 399px; }
.cn { width: 20px; }
.cname { width: 191px; }
.cval { width: 126px; }
.cadd { width: 62px; }
th, td { height: 19px; padding: 0; font-weight: normal; border: 1px solid #c0c0c0; border-width: 0 1px 1px 0; line-height: 16px; overflow: hidden; white-space: nowrap; }
th { background: linear-gradient(#fff, #efefef); text-align: center; }
thead th { height: 23px; }
thead .hot { background: linear-gradient(#fbdb9e, #f1be60); color: #500050; }
thead .add { text-align: left; padding-left: 2px; }
td:nth-child(2) { padding-left: 20px; }
td:nth-child(3) { padding-left: 2px; }
.grp td:nth-child(2) { padding-left: 2px; }
.grp button { width: 13px; height: 13px; line-height: 10px; border: 1px solid #999; background: #fff; color: #000; margin-right: 5px; }
td input { appearance: none; display: block; width: 13px; height: 13px; margin-left: 9px; border: 1px solid #222; background: #fff; }
.dim td { color: #808080; }
.blue td { color: #0000e0; }
.sel th { background: #ffd48a; color: #500050; }
.sel td:nth-child(2) { background: #0078d7; color: #fff; }
.sel td:nth-child(3) { background: #d9eafa; }

/* status and task bar */
.status { flex: none; height: 20px; display: flex; gap: 2px; font-family: "Liberation Sans", "Noto Sans CJK SC", sans-serif; }
.status span { border: 1px solid #d4d4d4; background: linear-gradient(#fff, #f0f0f0); padding-left: 1px; line-height: 18px; white-space: nowrap; }
.s1 { width: 148px; }
.s2 { width: 78px; }
.s3 { width: 98px; }
.s4 { width: 48px; }
.s5 { flex: 1; }
.s6 { width: 70px; }
.taskbar { flex: none; height: 40px; display: flex; align-items: center; background: #000; color: #fff; gap: 1px; }
.tk { width: 48px; height: 40px; display: grid; place-items: center; }
.tk svg { width: 24px; height: 24px; }
.tk .big { width: 28px; height: 28px; }
.tk:first-child svg { width: 16px; height: 16px; }
.find { display: flex; align-items: center; width: 345px; height: 40px; margin-left: -1px; padding: 0 14px 0 9px; gap: 5px; background: #333; }
.find input { flex: 1; min-width: 0; font-size: 14px; line-height: 20px; }
.find ::placeholder { color: #9a9a9a; }
.ring { width: 22px; height: 22px; }
.mic { width: 12px; height: 18px; }
.grip { width: 4px; height: 16px; margin: 0 10px; border: solid #444; border-width: 0 1px; }
.run { border-bottom: 2px solid #76b9ed; }
.on { background: #333; }
.hot.tk { background: #9a5118; border-bottom: 2px solid #ff7300; }
.tray { margin-left: auto; display: flex; align-items: center; gap: 8px; padding-right: 24px; }
.tray svg { width: 16px; height: 16px; }
.cpu, .clock { text-align: center; line-height: 18px; }
.cpu { color: #e8485c; margin-right: 10px; }
.clock { width: 66px; margin: 0 6px; }
.ime { font-size: 14px; }
.tray .sg { margin-left: 5px; }
.tray .note { width: 18px; height: 18px; }

/* floating input bar */
.imebar { position: absolute; left: 761px; top: 3px; height: 24px; display: flex; align-items: center; gap: 6px; padding-right: 2px; border: 1px solid #a9c3e0; background: #fff; color: #1f74cc; }
.imebar svg { width: 16px; height: 16px; }
.imebar b { font-size: 16px; }
.imebar .slogo { width: 28px; height: 28px; margin-left: -1px; }

/* parameter dialog */
.dialog { position: absolute; left: 725px; top: 84px; width: 548px; display: flex; flex-direction: column; padding: 0 7px 7px 6px; border: 1px solid #222; border-top-color: #fff; background: #b9d1ea; box-shadow: inset -1px -1px #45c8f0, inset 1px 0 #fff; }
.dialog h2 { height: 28px; margin: 0 -6px 0 -5px; padding: 9px 0 0 5px; background: linear-gradient(#99b4d1, #b9d1ea); line-height: 16px; font-family: "Noto Sans CJK SC", sans-serif; }
.radios { display: flex; align-items: center; gap: 132px; height: 34px; padding-left: 82px; background: #f0f0f0; border: 1px solid #fff; border-color: #fff #999 #999 #fff; }
.radios label { display: flex; align-items: center; gap: 3px; }
.radios input { appearance: none; width: 13px; height: 13px; border: 1px solid #333; border-radius: 50%; background: #fff; }
.radios input:checked { background: radial-gradient(circle, #222 0 3px, #fff 4px); }
.cad { display: block; width: 100%; background: #000; }
.han { fill: #fff; font: 300 22px "Noto Sans CJK SC", sans-serif; }
.val { fill: #00e000; font: 19px "Liberation Serif", serif; }
.foot { display: flex; justify-content: flex-end; align-items: center; height: 45px; padding-right: 25px; background: #f0f0f0; border-right: 1px solid #999; border-bottom: 1px solid #999; }
.foot button { width: 73px; height: 23px; background: #e1e1e1; border: 1px solid #adadad; }
```
